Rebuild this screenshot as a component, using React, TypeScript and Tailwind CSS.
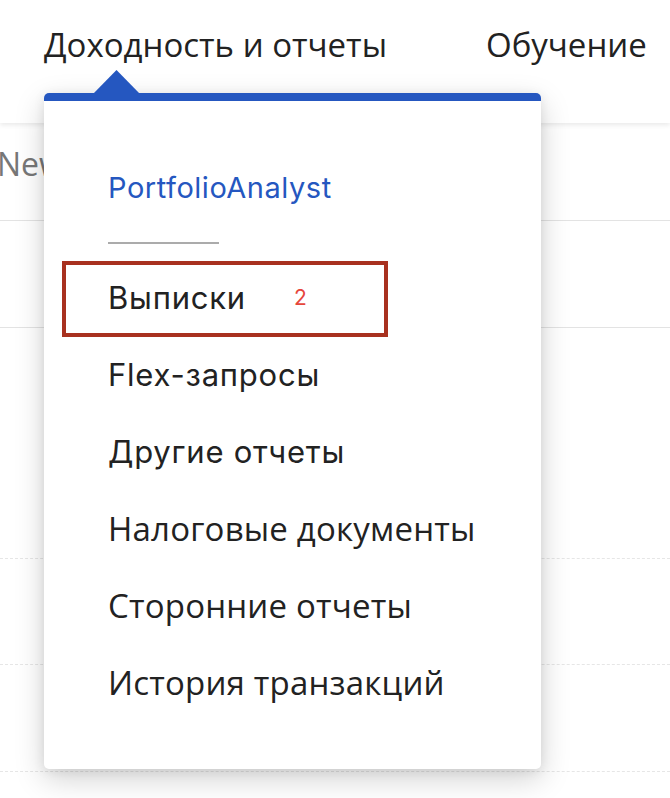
const menuItems: { label: string; geo: boolean }[] = [
  { label: 'Выписки', geo: true },
  { label: 'Flex-запросы', geo: true },
  { label: 'Другие отчеты', geo: true },
  { label: 'Налоговые документы', geo: false },
  { label: 'Сторонние отчеты', geo: false },
  { label: 'История транзакций', geo: false },
];

function ReportsMenu() {
  return (
    <div className="absolute z-20 left-[44px] top-[70px] w-[497px]">
      {/* pointer */}
      <div className="flex pl-[49px] h-[24px]">
        <svg width="47" height="24" viewBox="0 0 47 24" className="block">
          <polygon points="0,24 23.5,0 47,24" fill="#2557c0" />
        </svg>
      </div>
      <div className="-mt-px rounded-[5px] bg-white shadow-[0_10px_30px_rgba(0,0,0,0.18),0_2px_12px_rgba(0,0,0,0.08)] overflow-hidden">
        <div className="h-[8px] bg-[#2557c0]" />
        <div className="pt-[48px] pb-[48px] pl-[64px]">
          <div className="h-[77px] flex items-center font-['Inter'] text-[29px] leading-none text-[#2557c0] tracking-[0.018em]">
            PortfolioAnalyst
          </div>
          <div className="mt-[16px] h-[2px] w-[111px] bg-[#ababab]" />
          <ul className="mt-[15px]">
            {menuItems.map((item, i) => (
              <li
                key={item.label}
                className={
                  item.geo
                    ? "h-[77px] flex items-center font-['Inter'] text-[31px] leading-none text-[#222] tracking-[0.025em]"
                    : "h-[77px] flex items-center font-['Open_Sans'] text-[33px] leading-none text-[#222] tracking-[0.006em]"
                }
              >
                <span>{item.label}</span>
                {i === 0 && (
                  <span className="ml-[48px] font-['Inter'] text-[21px] tracking-normal text-[#e6463b]">2</span>
                )}
              </li>
            ))}
          </ul>
        </div>
      </div>
      {/* highlight frame around the statements entry */}
      <div className="absolute left-[18px] top-[191px] w-[326px] h-[76px] border-[4px] border-[#a8311f]" />
    </div>
  );
}

export default function App() {
  return (
    <div className="relative w-[670px] h-[798px] overflow-hidden bg-white font-['Open_Sans'] text-[#222]">
      <header className="relative z-10 h-[123px] bg-white shadow-[0_2px_5px_rgba(0,0,0,0.09)] flex items-start pt-[22px] pl-[44px]">
        <span className="w-[442px] text-[33px] leading-[45px] whitespace-nowrap">
          Доходность и отчеты
        </span>
        <span className="text-[33px] leading-[45px] whitespace-nowrap">Обучение</span>
      </header>
      <div className="h-[98px] border-b border-[#e3e3e3] pt-[18px] -ml-[3px]">
        <span className="text-[32px] leading-[45px] text-[#777]">New</span>
      </div>
      <div className="h-[107px] border-b border-[#e3e3e3]" />
      <div className="h-[231px] border-b border-dashed border-[#e6e6e6]" />
      <div className="h-[106px] border-b border-dashed border-[#e6e6e6]" />
      <div className="h-[107px] border-b border-dashed border-[#e6e6e6]" />
      <ReportsMenu />
    </div>
  );
}
